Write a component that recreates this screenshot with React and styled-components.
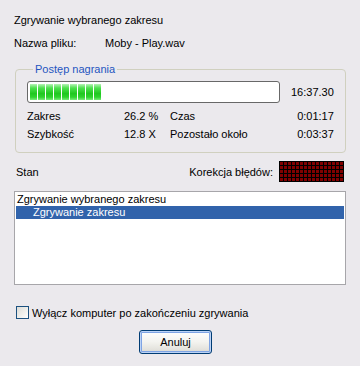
import React from 'react';
import styled, { createGlobalStyle } from 'styled-components';

const GlobalStyle = createGlobalStyle`
    html, body {
        margin: 0;
        padding: 0;
        background: #ebe9ed;
    }
`;

const Window = styled.div`
    width: 360px;
    height: 366px;
    box-sizing: border-box;
    padding: 12px 14px 0 14px;
    display: flex;
    flex-direction: column;
    background: #ebe9ed;
    font-family: "Liberation Sans", Arial, sans-serif;
    font-size: 11px;
    color: #000;
`;

const Line = styled.div`
    height: 16px;
    line-height: 16px;
    white-space: nowrap;
`;

const FileRow = styled(Line)`
    display: flex;
    margin-top: 7px;
`;

const FileLabel = styled.span`
    width: 91px;
`;

const GroupBox = styled.fieldset`
    margin: 11px 1px 0 1px;
    padding: 5px 11px 9px 11px;
    border: 1px solid #d0d0bf;
    border-radius: 4px;
`;

const Legend = styled.legend`
    padding: 0 2px;
    margin-left: 6px;
    line-height: 14px;
    color: #1f55c0;
`;

const ProgressRow = styled.div`
    display: flex;
    align-items: center;
    gap: 11px;
    height: 22px;
`;

const Bar = styled.div`
    width: 253px;
    height: 22px;
    box-sizing: border-box;
    border: 1px solid #686868;
    border-radius: 3px;
    background: #fff;
    padding: 2px 2px;
    display: flex;
    gap: 1px;
`;

const Block = styled.div`
    width: 7px;
    height: 16px;
    background: linear-gradient(to bottom, #b6f3b6 0%, #4ee04e 25%, #1fc81f 60%, #2fd42f 82%, #7ceb7c 100%);
`;

const Stats = styled.div`
    display: grid;
    grid-template-columns: 97px 46px 1fr auto;
    grid-auto-rows: 18px;
    align-items: center;
    margin-top: 4px;
`;

const Value = styled.span`
    text-align: ${p => (p.$right ? 'right' : 'left')};
`;

const StanRow = styled.div`
    display: flex;
    align-items: center;
    justify-content: space-between;
    height: 21px;
    margin: 8px 2px 0 2px;
`;

const Correction = styled.div`
    display: flex;
    align-items: center;
    gap: 6px;
`;

const Led = styled.div`
    display: grid;
    grid-template-columns: repeat(16, 3px);
    grid-auto-rows: 3px;
    gap: 1px;
    padding: 1px;
    background: #000;
`;

const LedCell = styled.div`
    background: #800000;
`;

const ListBox = styled.div`
    margin-top: 9px;
    height: 94px;
    box-sizing: border-box;
    border: 1px solid #a7a6aa;
    background: #fff;
    padding: 1px 1px;
`;

const ListItem = styled.div`
    height: 13px;
    line-height: 13px;
    padding-left: ${p => (p.$indent ? '17px' : '1px')};
    background: ${p => (p.$selected ? '#3163ab' : 'transparent')};
    color: ${p => (p.$selected ? '#fff' : '#000')};
    white-space: nowrap;
`;

const CheckRow = styled.label`
    display: flex;
    align-items: center;
    gap: 3px;
    height: 13px;
    margin: 21px 0 0 2px;
`;

const CheckBox = styled.span`
    width: 13px;
    height: 13px;
    box-sizing: border-box;
    border: 1px solid #1c5180;
    background: linear-gradient(135deg, #dcdcd7 0%, #f4f4f2 70%, #fff 100%);
`;

const Button = styled.button`
    align-self: flex-start;
    margin: 11px 0 0 125px;
    width: 73px;
    height: 24px;
    border: 1px solid #003c74;
    border-radius: 3px;
    background: linear-gradient(to bottom, #ffffff 0%, #f3f3ef 50%, #e3e2dc 85%, #d6d0c5 100%);
    box-shadow: inset 0 0 0 1px #bcd3f6, inset 0 0 0 2px #7fa4e4;
    font-family: inherit;
    font-size: 11px;
    color: #000;
    padding: 0;
`;

const blocks = Array.from({ length: 9 });
const ledCells = Array.from({ length: 80 });

const App = () => {
    return (
        <>
            <GlobalStyle />
            <Window>
                <Line>Zgrywanie wybranego zakresu</Line>
                <FileRow>
                    <FileLabel>Nazwa pliku:</FileLabel>
                    <span>Moby - Play.wav</span>
                </FileRow>
                <GroupBox>
                    <Legend>Postęp nagrania</Legend>
                    <ProgressRow>
                        <Bar>
                            {blocks.map((_, i) => <Block key={i} />)}
                        </Bar>
                        <span>16:37.30</span>
                    </ProgressRow>
                    <Stats>
                        <span>Zakres</span>
                        <Value>26.2 %</Value>
                        <span>Czas</span>
                        <Value $right>0:01:17</Value>
                        <span>Szybkość</span>
                        <Value>12.8 X</Value>
                        <span>Pozostało około</span>
                        <Value $right>0:03:37</Value>
                    </Stats>
                </GroupBox>
                <StanRow>
                    <span>Stan</span>
                    <Correction>
                        <span>Korekcja błędów:</span>
                        <Led>
                            {ledCells.map((_, i) => <LedCell key={i} />)}
                        </Led>
                    </Correction>
                </StanRow>
                <ListBox>
                    <ListItem>Zgrywanie wybranego zakresu</ListItem>
                    <ListItem $indent $selected>Zgrywanie zakresu</ListItem>
                </ListBox>
                <CheckRow>
                    <CheckBox />
                    <span>Wyłącz komputer po zakończeniu zgrywania</span>
                </CheckRow>
                <Button>Anuluj</Button>
            </Window>
        </>
    );
};

export default App;
